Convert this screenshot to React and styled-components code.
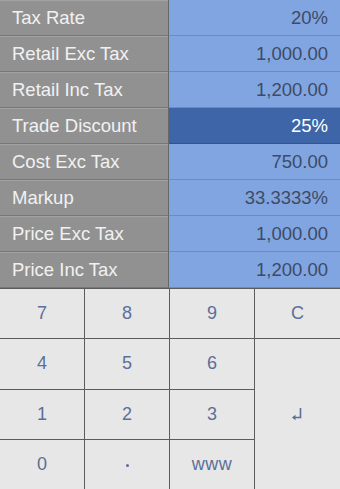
import React from "react"
import styled, { createGlobalStyle } from "styled-components"

const GlobalStyle = createGlobalStyle`
  html, body {
    margin: 0;
    padding: 0;
    background: #e7e7e7;
  }
  body {
    font-family: "Liberation Sans", Arial, sans-serif;
  }
`

const Screen = styled.div`
  width: 340px;
  height: 489px;
  display: flex;
  flex-direction: column;
  overflow: hidden;
`

const Table = styled.div`
  display: flex;
  flex-direction: column;
`

const Row = styled.div`
  display: grid;
  grid-template-columns: 169px 1fr;
  height: 36px;
`

const Label = styled.div`
  display: flex;
  align-items: center;
  padding: 1px 0 0 12px;
  background: #919191;
  color: #f1f1f1;
  font-size: 18.5px;
  border-right: 1px solid #676767;
  border-bottom: 1px solid #777;
  box-shadow: inset 0 1px 0 #a2a2a2;
`

const Value = styled.div`
  display: flex;
  align-items: center;
  justify-content: flex-end;
  padding: 1px 12px 0 0;
  font-size: 18.5px;
  background: ${({ active }) => (active ? "#3d65a7" : "#81a5e1")};
  color: ${({ active }) => (active ? "#ffffff" : "#3d4b66")};
  border-bottom: 1px solid ${({ active }) => (active ? "#2f5493" : "#6a8cc5")};
`

const Keypad = styled.div`
  flex: 1;
  display: grid;
  grid-template-columns: 84px 84px 84px 1fr;
  grid-template-rows: repeat(4, 1fr);
  gap: 1px;
  background: #5c5c5c;
  border-top: 1px solid #5c5c5c;
`

const Key = styled.div`
  display: flex;
  align-items: center;
  justify-content: center;
  background: #e7e7e7;
  color: #5b6f98;
  font-size: 18px;
  grid-row: ${({ tall }) => (tall ? "2 / span 3" : "auto")};
  grid-column: ${({ col }) => col || "auto"};
`

const Dot = styled.span`
  width: 3px;
  height: 3px;
  border-radius: 50%;
  background: #5b6f98;
  margin-top: 2px;
`

const Small = styled.span`
  font-size: 18px;
  letter-spacing: 0.5px;
`

const ReturnIcon = () => (
  <svg width="12" height="14" viewBox="0 0 12 14" style={{ marginRight: 2 }}>
    <path d="M9.5 1 V10.5 H2.5" fill="none" stroke="#5b6f98" strokeWidth="1.6" />
    <path d="M1 10.5 L4.5 7.8 V13.2 Z" fill="#5b6f98" />
  </svg>
)

const rows = [
  ["Tax Rate", "20%"],
  ["Retail Exc Tax", "1,000.00"],
  ["Retail Inc Tax", "1,200.00"],
  ["Trade Discount", "25%", true],
  ["Cost Exc Tax", "750.00"],
  ["Markup", "33.3333%"],
  ["Price Exc Tax", "1,000.00"],
  ["Price Inc Tax", "1,200.00"],
]

const App = () => {
  return (
    <Screen>
      <GlobalStyle />
      <Table>
        {rows.map(([label, value, active]) => (
          <Row key={label}>
            <Label>{label}</Label>
            <Value active={active}>{value}</Value>
          </Row>
        ))}
      </Table>
      <Keypad>
        <Key>7</Key>
        <Key>8</Key>
        <Key>9</Key>
        <Key>C</Key>
        <Key>4</Key>
        <Key>5</Key>
        <Key>6</Key>
        <Key tall col="4">
          <ReturnIcon />
        </Key>
        <Key>1</Key>
        <Key>2</Key>
        <Key>3</Key>
        <Key>0</Key>
        <Key>
          <Dot />
        </Key>
        <Key>
          <Small>www</Small>
        </Key>
      </Keypad>
    </Screen>
  )
}

export default App
